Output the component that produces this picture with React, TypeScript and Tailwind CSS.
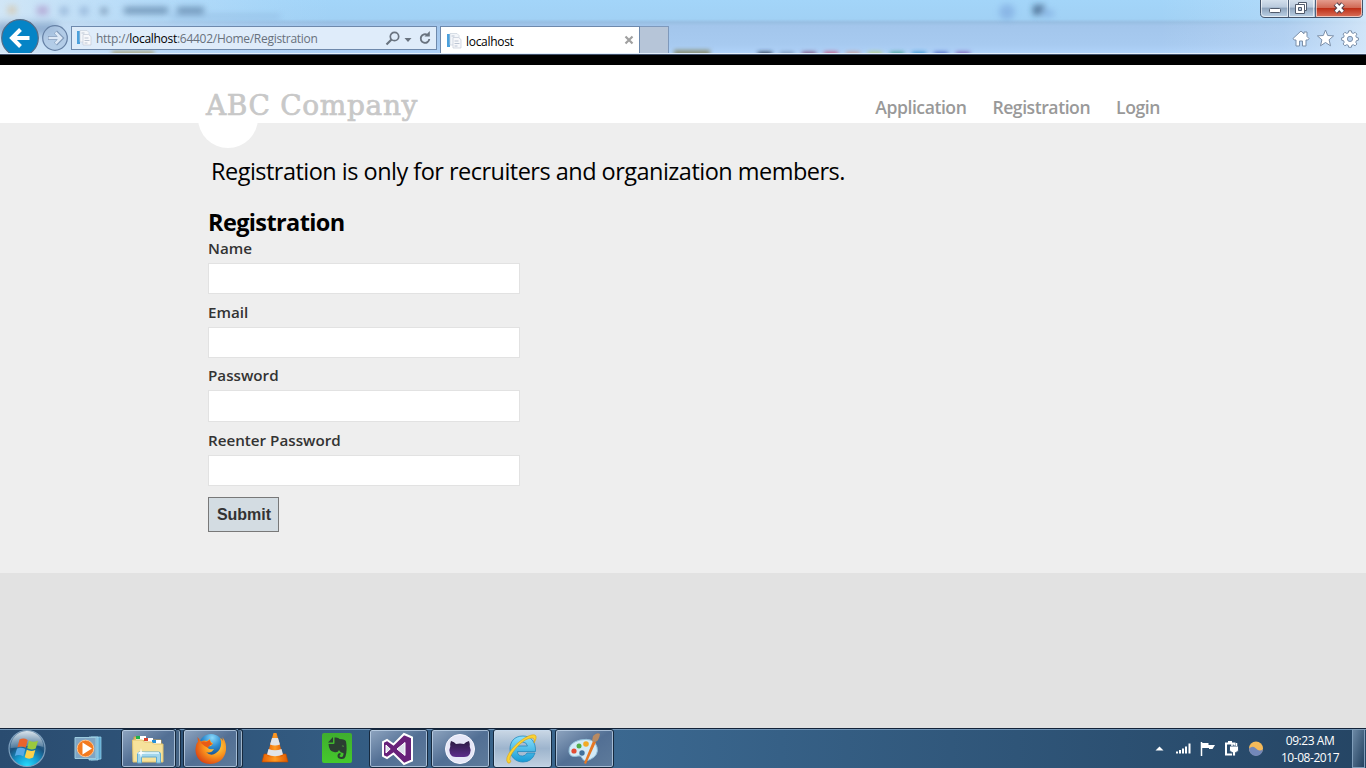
import React from "react";

const SANS = "font-['Open_Sans','Noto_Sans',sans-serif]";

function GlassBackdrop() {
  const swatches = ["#26354f", "#7d94b8", "#7c4a78", "#c44e78", "#c99a92", "#b9cf7a", "#3fa08f", "#2e90d0", "#4a63c4", "#7a58b4"];
  return (
    <svg className="absolute inset-0" width="1366" height="54" aria-hidden="true">
      <defs>
        <linearGradient id="sky" x1="0" y1="0" x2="0" y2="1">
          <stop offset="0" stopColor="#a3d5f9" />
          <stop offset=".35" stopColor="#a1d1f5" />
          <stop offset=".41" stopColor="#98bfe3" />
          <stop offset=".48" stopColor="#a3c6ec" />
          <stop offset=".82" stopColor="#a7caf0" />
          <stop offset="1" stopColor="#b0d3fa" />
        </linearGradient>
        <linearGradient id="leftShine">
          <stop offset="0" stopColor="#d6e8f6" stopOpacity=".9" />
          <stop offset=".35" stopColor="#cbe3f8" stopOpacity=".6" />
          <stop offset="1" stopColor="#b5dbf9" stopOpacity="0" />
        </linearGradient>
        <linearGradient id="rightShine">
          <stop offset="0" stopColor="#d6e8fb" stopOpacity="0" />
          <stop offset=".6" stopColor="#d6e8fb" stopOpacity=".25" />
          <stop offset="1" stopColor="#dcecfb" stopOpacity=".8" />
        </linearGradient>
        <filter id="b2" x="-50%" y="-50%" width="200%" height="200%"><feGaussianBlur stdDeviation="2" /></filter>
        <filter id="b3" x="-50%" y="-80%" width="200%" height="260%"><feGaussianBlur stdDeviation="3.2" /></filter>
        <filter id="b4" x="-50%" y="-80%" width="200%" height="260%"><feGaussianBlur stdDeviation="4" /></filter>
      </defs>
      <rect width="1366" height="54" fill="url(#sky)" />
      <rect width="330" height="54" fill="url(#leftShine)" />
      <rect x="1160" width="206" height="54" fill="url(#rightShine)" />
      <rect x="-5" y="23" width="62" height="12" fill="#6f93bd" opacity=".7" filter="url(#b4)" />
      <g filter="url(#b3)" opacity=".6">
        <rect x="8" y="6" width="8" height="8" fill="#d9b98a" />
        <rect x="37" y="6" width="11" height="9" fill="#a98bc4" />
        <rect x="60" y="7" width="8" height="8" fill="#7f9fc8" />
        <rect x="80" y="7" width="8" height="8" fill="#7f9fc8" />
        <rect x="101" y="8" width="6" height="6" fill="#425c7c" />
        <rect x="124" y="7" width="44" height="7" fill="#4a6d92" />
        <rect x="177" y="7" width="27" height="7" fill="#4a6d92" />
        <rect x="170" y="15" width="110" height="3" fill="#7fa6d0" />
        <circle cx="1007" cy="12" r="8" fill="#7ba6dd" />
        <rect x="1033" y="5" width="12" height="10" fill="#1c3a5f" />
        <rect x="1042" y="10" width="12" height="7" fill="#7fa9de" />
      </g>
      <g filter="url(#b2)">
        <rect x="112" y="51" width="42" height="6" fill="#aba883" />
        <rect x="674" y="50" width="36" height="7" fill="#8a9076" />
        {swatches.map((c, i) => (
          <rect key={c} x={758 + i * 22} y="52" width="14" height="5" fill={c} />
        ))}
      </g>
      <rect y="53" width="1366" height="1" fill="#e3effc" />
    </svg>
  );
}

function PageIcon() {
  return (
    <svg width="16" height="16" viewBox="0 0 16 16">
      <path d="M1 1h3v13H1z" fill="#4ba0dc" />
      <path d="M4 .5h7l2 2V12H4z" fill="#f3f6fa" stroke="#c9d1dc" strokeWidth=".7" />
      <path d="M7 4.500h5.500l2.500 2V15H7z" fill="#f7f8fb" stroke="#c3cad7" strokeWidth=".7" />
      <path d="M8.500 8h4M8.500 10.500h5M8.500 13h3M5.500 3h3" stroke="#bcc5d3" />
    </svg>
  );
}

function Browser() {
  return (
    <header className="relative h-[54px] w-full overflow-hidden">
      <GlassBackdrop />
      <div className="relative flex h-[54px] items-start">
        <svg width="71" height="53" viewBox="0 0 71 53" className="shrink-0">
          <circle cx="20" cy="38" r="18.300" fill="#0584c6" stroke="#566c86" strokeWidth="1.200" />
          <path d="M29.500 38H12.500M20.500 29.500L12 38l8.500 8.500" fill="none" stroke="#fff" strokeWidth="4" />
          <circle cx="55" cy="38" r="12.300" fill="#abc5e1" fillOpacity=".7" stroke="#6681a5" strokeWidth="1.200" />
          <path d="M48 38h13M55.500 32l6 6-6 6" fill="none" stroke="#7f99b8" strokeWidth="4.200" />
          <path d="M48.500 38h12M55.500 32.500l5.500 5.500-5.500 5.500" fill="none" stroke="#dce8f6" strokeWidth="2.600" />
        </svg>
        <div className="mt-[26px] flex h-6 w-[366px] shrink-0 items-center border border-[#6e89ac] bg-[#dfecfa] pl-1">
          <PageIcon />
          <span className="ml-1 whitespace-nowrap pt-[2px] text-[12px] leading-4 tracking-[-0.28px] text-[#68717c] font-['Open_Sans','Noto_Sans',sans-serif]">
            http://<span className="text-black">localhost</span>:64402/Home/Registration
          </span>
          <svg className="ml-auto mr-[3px]" width="48" height="20" viewBox="0 0 48 20">
            <circle cx="9.500" cy="8.500" r="4.200" fill="none" stroke="#69737f" strokeWidth="1.700" />
            <path d="M6.500 11.500L1.500 16.500" stroke="#69737f" strokeWidth="2.200" />
            <path d="M19.500 10h7l-3.500 4z" fill="#69737f" />
            <path d="M42.500 7A4.300 4.300 0 1 0 44.300 11" fill="none" stroke="#69737f" strokeWidth="1.900" />
            <path d="M39.500 8.500h5.300V3z" fill="#69737f" />
          </svg>
        </div>
        <div className="ml-[3px] mt-[26px] flex h-[27px] w-[200px] shrink-0 items-center border border-b-0 border-[#6e89ac] bg-white pl-[5px] pt-[2px]">
          <PageIcon />
          <span className="ml-[4px] pt-px text-[12px] leading-4 tracking-[-0.3px] text-black font-['Open_Sans','Noto_Sans',sans-serif]">localhost</span>
          <svg className="ml-auto mr-[5px] -translate-y-px" width="10" height="10" viewBox="0 0 10 10">
            <path d="M1.500 1.500l7 7M8.500 1.500l-7 7" stroke="#a0a0a0" strokeWidth="2.200" />
          </svg>
        </div>
        <div className="mt-[26px] h-[27px] w-[29px] shrink-0 border border-b-0 border-l-0 border-[#7e99bc] bg-[#b6c5d8]" />
        <div className="ml-auto flex w-[106px] flex-col">
          <svg width="106" height="20" viewBox="0 0 106 20">
            <defs>
              <linearGradient id="cap" x1="0" y1="0" x2="0" y2="1">
                <stop offset="0" stopColor="#dbe6f1" /><stop offset=".48" stopColor="#b8c9dc" />
                <stop offset=".5" stopColor="#8ca2bb" /><stop offset="1" stopColor="#bed4e8" />
              </linearGradient>
              <linearGradient id="close" x1="0" y1="0" x2="0" y2="1">
                <stop offset="0" stopColor="#e6a294" /><stop offset=".48" stopColor="#d16a56" />
                <stop offset=".5" stopColor="#bd2c14" /><stop offset="1" stopColor="#d9705a" />
              </linearGradient>
            </defs>
            <path d="M.5-2v15.500q0 4 4.500 4h93q4.500 0 4.500-4V-2z" fill="url(#cap)" stroke="#42536a" />
            <path d="M55.500-1H102v14q0 4-4 4H55.500z" fill="url(#close)" />
            <path d="M1.500 0v13.500q0 3 3.500 3h22.500V0M29.500 0v16.500h24V0M56.500 0v16.500H98q3.500 0 3.500-3V0" fill="none" stroke="#fff" strokeOpacity=".6" />
            <path d="M28.500 0v17M55.500 0v17" stroke="#50637c" />
            <rect x="9.500" y="8.500" width="11" height="4" rx="1" fill="#fff" stroke="#505b6c" />
            <path d="M38.500 2.500h8v8h-8z" fill="#fff" stroke="#505b6c" />
            <path d="M35.500 4.500h9v9h-9z" fill="#fff" stroke="#505b6c" />
            <path d="M38.500 7.500h3v3h-3z" fill="#b8c9dc" stroke="#505b6c" />
            <path d="M75.500 4l7.500 8M83 4l-7.500 8" stroke="#57404b" strokeWidth="5" />
            <path d="M75.800 4.300l7 7.400M82.800 4.300l-7 7.400" stroke="#fff" strokeWidth="2.800" />
          </svg>
          <svg className="mt-[9px]" width="106" height="19" viewBox="0 0 106 19">
            <g fill="#fff" stroke="#7b8fa9" strokeWidth="1">
              <path d="M41 2l3 2.800V3h3v4.500l2 2-1.200 1.500H46v6h-3.500v-5h-3v5H36v-6h-1.800L33 9.500z" />
              <path d="M65.500 1l2.200 5.500 5.900.4-4.500 3.900 1.400 6-5-3.300-5 3.300 1.400-6-4.500-3.900 5.900-.4z" />
              <path d="M88.700 1.800h2.600l.5 2 1.500.6 1.800-1.100 1.800 1.800-1.100 1.800.6 1.500 2 .5v2.300l-2 .5-.6 1.500 1.100 1.800-1.800 1.800-1.800-1.100-1.500.6-.5 2h-2.600l-.5-2-1.500-.6-1.800 1.100-1.800-1.800 1.100-1.800-.6-1.500-2-.5V8.900l2-.5.6-1.500-1.100-1.800 1.800-1.800 1.800 1.100 1.500-.6z" />
              <circle cx="90" cy="9.900" r="2.600" fill="#b8d1ef" />
            </g>
          </svg>
        </div>
      </div>
    </header>
  );
}

const fields = [
  { label: "Name", cls: "h-[31px] mb-[9px]" },
  { label: "Email", cls: "h-[31px] mb-[8px]" },
  { label: "Password", cls: "h-[32px] mb-[9px]" },
  { label: "Reenter Password", cls: "h-[31px] mb-[11px]" },
];

function Site() {
  return (
    <>
      <div className="h-[11px] border-t border-[#40506a] bg-black" />
      <div className="flex h-[58px] bg-white">
        <div className="relative ml-[198px] w-[260px]">
          <div className="absolute top-[23px] h-[60px] w-[60px] rounded-full bg-white" />
          <div className="relative ml-2 mt-[22px] whitespace-nowrap text-[28px] leading-[38px] tracking-[0.65px] text-[#c8c8c8] [-webkit-text-stroke:0.7px_#c8c8c8] font-['DejaVu_Serif',serif]">ABC Company</div>
        </div>
        <nav className={`ml-auto mr-[206px] mt-[30px] flex gap-[26px] text-[17.6px] font-semibold leading-6 tracking-[-0.45px] text-[#999] ${SANS}`}>
          <a>Application</a><a>Registration</a><a>Login</a>
        </nav>
      </div>
      <main className={`h-[450px] bg-[#eee] pl-[208px] ${SANS}`}>
        <p className="ml-[3px] whitespace-nowrap pt-[32px] text-[23.5px] leading-8 tracking-[-0.52px] text-black">Registration is only for recruiters and organization members.</p>
        <h2 className="mt-[19px] text-[23.5px] font-bold leading-8 tracking-[-0.62px] text-black">Registration</h2>
        <form className="pt-px">
          {fields.map((f) => (
            <div key={f.label} className="flex flex-col">
              <label className="mb-[7px] h-[17px] -translate-y-px text-[15.200px] font-semibold leading-[20px] text-[#333]">{f.label}</label>
              <input className={"w-[312px] border border-[#e2e2e2] bg-white outline-none " + f.cls} />
            </div>
          ))}
          <button type="button" className="block h-[35px] w-[71px] border border-[#787878] bg-[#d3dce2] pl-px text-[16px] font-bold leading-8 text-[#333] font-['Liberation_Sans',sans-serif]">Submit</button>
        </form>
      </main>
      <div className="h-[155px] bg-[#e2e2e2]" />
    </>
  );
}

function TaskButton({ active, stacked, children }: { active?: boolean; stacked?: boolean; children: React.ReactNode }) {
  return (
    <div className="flex h-[39px]">
      <div className={(stacked ? "w-[55px] " : "w-[59px] ") + "flex items-center justify-center rounded-[3px] border border-[#16293e] pr-[2px] shadow-[inset_0_0_0_1px_rgba(200,220,240,.7)] " + (active ? "bg-linear-to-b from-[#cbd8e6] via-[#9db4cd] to-[#c1d1e1]" : "bg-linear-to-br from-[#8fa5c0] via-[#526f94] to-[#5e7b9b]")}>
        {children}
      </div>
      {stacked && <div className="w-[5px] rounded-r-[3px] border border-l-0 border-[#16293e] bg-[#456485] shadow-[inset_-1px_0_0_0_#a1b6cb]" />}
    </div>
  );
}

function StartOrb() {
  return (
    <svg width="40" height="39" viewBox="0 0 40 39">
      <defs>
        <radialGradient id="orb" cx=".5" cy="1" r=".95"><stop offset="0" stopColor="#28e0ff" /><stop offset=".35" stopColor="#149bd0" /><stop offset=".65" stopColor="#1b537f" /><stop offset="1" stopColor="#5c7894" /></radialGradient>
        <linearGradient id="orbTop" x1="0" y1="0" x2="0" y2="1"><stop offset="0" stopColor="#eef6fb" stopOpacity=".85" /><stop offset="1" stopColor="#a5bfd4" stopOpacity=".35" /></linearGradient>
      </defs>
      <circle cx="20" cy="19.500" r="18" fill="url(#orb)" stroke="#7ea0be" strokeWidth="1.200" />
      <path d="M3.500 19a16.500 16.500 0 0 1 33-1q-8-3-16-1t-17 2z" fill="url(#orbTop)" />
      <path d="M12.500 10.500q4-2.300 8.200.4l-2 7.800q-4.200-2.300-8.300-.5z" fill="#e8632c" />
      <path d="M22 11.500q4.500 2.300 9 .2l-2.300 7.800q-4.200 2-8.500-.2z" fill="#9bc93d" />
      <path d="M10 19.500q4.200-1.800 8.300.4l-2 7.600q-4-2.500-8.500-.6z" fill="#57a9e6" />
      <path d="M19.800 20.800q4.200 2.200 8.500.2l-2.100 7.600q-4.300 2.200-8.500-.3z" fill="#fbd14b" />
    </svg>
  );
}

function Taskbar() {
  return (
    <footer className="flex h-10 items-start border-t border-[#132339] bg-linear-to-r from-[#2a4c70] via-[#3b6890] via-45% to-[#254564] shadow-[inset_0_1px_0_0_#6f93b5]">
      <div className="w-[7px]" />
      <StartOrb />
      <svg className="ml-[26px] mt-1" width="30" height="30" viewBox="0 0 30 30">
        <path d="M18 4h10v22l-10 1z" fill="#5ba5cd" stroke="#9ad8f1" strokeWidth=".7" /><path d="M16 4h9v23h-9z" fill="#6fb5da" stroke="#b3e3f6" strokeWidth=".7" />
        <path d="M2 4.500h21v21H2z" fill="#7fa5c4" stroke="#9dccdf" />
        <circle cx="12.500" cy="15.500" r="8.300" fill="#f37a1f" stroke="#ffc28c" /><path d="M9.500 9.500l9.500 6-9.500 6z" fill="#fff" />
      </svg>
      <div className="ml-[18px]">
        <TaskButton stacked>
          <svg width="34" height="32" viewBox="0 0 34 32">
            <path d="M3 4h10l2 3h15v19H3z" fill="#e2c36c" stroke="#c9a44e" />
            <path d="M5 3h10v4H5z" fill="#fff" /><path d="M5 3h4v3H5z" fill="#1fb24a" /><path d="M13 5h9v4h-9z" fill="#fff" /><path d="M13 5h4v3h-4z" fill="#d9442f" /><path d="M21 7h9v4h-9z" fill="#fff" /><path d="M21 7h4v3h-4z" fill="#268fd9" />
            <path d="M1.500 7h10l2 2h7l2 2H32v18H2z" fill="#f6e29b" stroke="#e2c46f" />
            <path d="M6.500 30V21q0-2 2-2h19q2 0 2 2v9h-4v-6h-15v6z" fill="#a2d6ec" stroke="#62abcf" />
            <path d="M8 20h20" stroke="#e8faff" strokeWidth="1.500" /><path d="M10 15l1 4 4 1-4 1-1 4-1-4-4-1 4-1z" fill="#fff" opacity=".85" />
          </svg>
        </TaskButton>
      </div>
      <div className="ml-[2px]">
        <TaskButton stacked>
          <svg width="32" height="32" viewBox="0 0 32 32">
            <defs>
              <radialGradient id="fx" cx=".65" cy=".35" r=".75"><stop offset="0" stopColor="#ffdf4c" /><stop offset=".5" stopColor="#fa941d" /><stop offset="1" stopColor="#d73c13" /></radialGradient>
              <radialGradient id="globe" cx=".55" cy=".15" r=".8"><stop offset="0" stopColor="#8ad8fa" /><stop offset=".45" stopColor="#2f8fd2" /><stop offset="1" stopColor="#123f80" /></radialGradient>
            </defs>
            <circle cx="17" cy="13.500" r="12.500" fill="url(#globe)" />
            <path d="M3.500 4l3.500 4.500Q10 7 13 8l3-2q0 3 3 4l-2 3q-4 0-3 2t6 1q-3 5-8 3 5 5 10 1 6-4 5-12-.5-2-1-3 2 .500 3 3 0-3-1-4 4.500 4 4 13C31 26 24 31 16 31 8 31 1 25 1.500 16Q2 10 4 9z" fill="url(#fx)" />
            <path d="M7 9.500q2-1.500 5-.5l4-2q0 3 3 4-5 2-5 4-4-2-7-5z" fill="#e85b16" />
          </svg>
        </TaskButton>
      </div>
      <svg className="ml-[15px] mt-[3px]" width="34" height="32" viewBox="0 0 34 32">
        <defs><linearGradient id="vlc"><stop offset="0" stopColor="#e85e00" /><stop offset=".5" stopColor="#ff9c24" /><stop offset="1" stopColor="#de5700" /></linearGradient></defs>
        <path d="M6 22h22l2 8H4z" fill="url(#vlc)" stroke="#b84c00" strokeWidth=".6" /><path d="M15.500 1h3L25 24q-8 4-16 0z" fill="url(#vlc)" />
        <path d="M14 6h6l2 6.500q-5 2-10 0zM10.500 17q6.500 2.500 13 0l1.500 5.500q-8 3.500-16 0z" fill="#e1e4e8" />
      </svg>
      <svg className="ml-[30px] mt-1" width="30" height="32" viewBox="0 0 30 32">
        <defs><linearGradient id="ever" x1="0" y1="0" x2="0" y2="1"><stop offset="0" stopColor="#3fae2e" /><stop offset="1" stopColor="#45c92c" /></linearGradient></defs>
        <rect y="0" width="30" height="30" rx="2" fill="url(#ever)" /><path d="M11 4v5.500H6z" fill="#2b3e32" />
        <path d="M12.500 4.500q4-.5 5 1.500 6 0 6.500 2.500 1.500 8-.5 15-.7 2.500-3.700 2.500-4.300 0-4.300-3 0-3 3-3v2q-1 0-1 1t2 1q2 0 2-4-3 0-4.500-3-1 3-5 2-5-.5-5.500-8h5q1 0 1-1z" fill="#2b3e32" />
        <path d="M19.500 13q2-1.500 2.500.7z" fill="#58b841" />
      </svg>
      <div className="ml-[17px] flex gap-[3px]">
        <TaskButton>
          <svg width="34" height="34" viewBox="0 0 34 34">
            <path d="M23 2l8 3.500v23L23 32 12.500 21.500 6 26l-4-2V10l4-2 6.500 4.500z" fill="#68217a" stroke="#fff" strokeWidth="2" />
            <path d="M5 13v8l4.200-4zM16 17l8-6.500v13z" fill="#dce2eb" stroke="#fff" strokeWidth="1" />
          </svg>
        </TaskButton>
        <TaskButton>
          <svg width="32" height="32" viewBox="0 0 32 32">
            <defs><linearGradient id="cat" x1="0" y1="0" x2="0" y2="1"><stop offset="0" stopColor="#2b1b42" /><stop offset="1" stopColor="#5d2d8c" /></linearGradient></defs>
            <circle cx="16" cy="16" r="14.500" fill="#e6e7f7" stroke="#f8f8ff" />
            <path d="M7 8q3.500 1 5 3 4-.8 8 0 1.500-2 5-3 1.200 3 .7 5.500Q27.500 17 26 20.500 24.500 24 20 24h-8q-4.500 0-6-3.500Q4.500 17 6.300 13.500 5.800 11 7 8z" fill="url(#cat)" />
          </svg>
        </TaskButton>
        <TaskButton active>
          <svg width="34" height="34" viewBox="0 0 34 34">
            <defs><linearGradient id="ie" x1="0" y1="0" x2="0" y2="1"><stop offset="0" stopColor="#8ee0fc" /><stop offset="1" stopColor="#159bd6" /></linearGradient></defs>
            <path d="M18 4C9 4 5 10 5 17s5 13 13 13q9 0 12-9h-8q-1.500 3-4.500 3-5 0-5-4.500h18C31 10 26 4 18 4zM12.500 14q1-4 5-4t5 4z" fill="url(#ie)" stroke="#2389bd" strokeWidth=".8" />
            <path d="M3 31Q-1 27 7 17C16 6 29 0 31 4q1 2-2 7 1-4-1-5Q21 5 11 16 2 27 6 29q-1 3-3 2z" fill="#fad234" stroke="#d8a316" strokeWidth=".6" />
          </svg>
        </TaskButton>
        <TaskButton>
          <svg width="34" height="34" viewBox="0 0 34 34">
            <path d="M13 8Q27 5 30 15q2 8-6 12-7 4-9-1-1-3-4-2-8 2-9-4Q1 11 13 8z" fill="#d3ebf8" stroke="#93c0da" />
            <circle cx="7" cy="19" r="2.600" fill="#e24c34" /><circle cx="12" cy="14" r="2.500" fill="#4fac48" /><circle cx="19" cy="12" r="2.800" fill="#f2aa27" /><circle cx="15" cy="21" r="2.700" fill="#42719a" />
            <path d="M19 32l-2-1L26 9l3 1z" fill="#e67824" /><path d="M25 9l1-5q4-4 7-2-1 7-5 8z" fill="#b88a62" />
          </svg>
        </TaskButton>
      </div>
      <svg className="ml-auto mt-[10px]" width="112" height="20" viewBox="0 0 112 20">
        <path d="M3.500 11.500l4-4 4 4z" fill="#fff" />
        <path d="M25 14.500v-2M28 14.500v-3.500M31 14.500v-5M34 14.500v-7M37.500 14.500V4.500" stroke="#fff" strokeWidth="2" />
        <path d="M49.500 3v14" stroke="#fff" strokeWidth="1.500" /><path d="M50 4h6.500v2H63l-2.500 4H57V9h-7z" fill="#fff" />
        <path d="M74 4.500h8.500v11H74z" fill="none" stroke="#fff" strokeWidth="2" /><path d="M76 2h4v2h-4z" fill="#fff" />
        <path d="M77.500 7h9v4q0 2-3 2.500V17h-3v-3.500q-3-.5-3-2.500z" fill="#fff" stroke="#29496c" strokeWidth=".9" /><path d="M80 4v3M84.500 4v3" stroke="#fff" strokeWidth="1.500" />
        <circle cx="104" cy="9.500" r="7" fill="#f5ba59" /><path d="M97 9.500q4-3.500 7 0t7 1a7 7 0 0 1-14-1z" fill="#7388b9" />
      </svg>
      <div className={`ml-[11px] mt-[3px] w-[70px] whitespace-nowrap text-center text-[12px] leading-[17px] tracking-[-0.45px] text-white ${SANS}`}>
        <div>09:23 AM</div><div>10-08-2017</div>
      </div>
      <div className="ml-[7px] mr-px h-[39px] w-[13px] border border-[#7f9db9] bg-linear-to-br from-[#6b88a4] to-[#23415f]" />
    </footer>
  );
}

export default function App() {
  return (
    <div className="flex h-[768px] w-[1366px] flex-col overflow-hidden">
      <Browser />
      <Site />
      <Taskbar />
    </div>
  );
}
